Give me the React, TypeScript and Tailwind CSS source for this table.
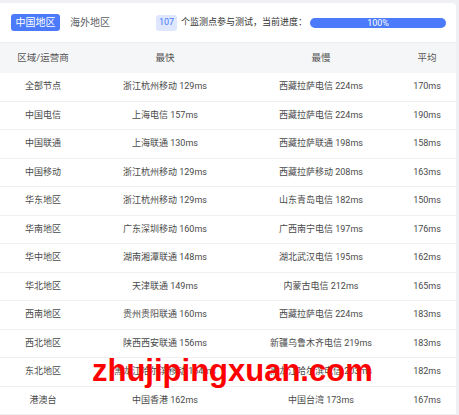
import React from "react";

const rows: [string, string, string, string][] = [
  ["全部节点", "浙江杭州移动 129ms", "西藏拉萨电信 224ms", "170ms"],
  ["中国电信", "上海电信 157ms", "西藏拉萨电信 224ms", "190ms"],
  ["中国联通", "上海联通 130ms", "西藏拉萨联通 198ms", "158ms"],
  ["中国移动", "浙江杭州移动 129ms", "西藏拉萨移动 208ms", "163ms"],
  ["华东地区", "浙江杭州移动 129ms", "山东青岛电信 182ms", "150ms"],
  ["华南地区", "广东深圳移动 160ms", "广西南宁电信 197ms", "176ms"],
  ["华中地区", "湖南湘潭联通 148ms", "湖北武汉电信 195ms", "162ms"],
  ["华北地区", "天津联通 149ms", "内蒙古电信 212ms", "165ms"],
  ["西南地区", "贵州贵阳联通 160ms", "西藏拉萨电信 224ms", "183ms"],
  ["西北地区", "陕西西安联通 156ms", "新疆乌鲁木齐电信 219ms", "183ms"],
  ["东北地区", "黑龙江哈尔滨移动 164ms", "黑龙江哈尔滨电信 203ms", "182ms"],
  ["港澳台", "中国香港 162ms", "中国台湾 173ms", "167ms"],
];

export default function App() {
  return (
    <div
      className="relative w-[459px] h-[415px] overflow-hidden bg-[#eef0f3] pt-[3px]"
      style={{ fontFamily: 'Roboto, "Noto Sans CJK SC", sans-serif' }}
    >
      <div className="w-[456px] h-[412px] bg-white rounded-tr-[4px] overflow-hidden">
        <div className="h-[40px] flex items-center border-b border-[#ebeef5] pl-[11px]">
          <div className="h-[17px] w-[49px] rounded-[3px] bg-[#4b7bfa] text-white text-[10px] flex items-center justify-center">
            中国地区
          </div>
          <div className="ml-[10px] text-[10px] text-[#606266]">海外地区</div>
          <div className="ml-[46px] h-[16px] w-[21px] rounded-[3px] bg-[#dfe7ff] text-[#4b7bfa] text-[9px] flex items-center justify-center">
            107
          </div>
          <div className="ml-[4px] text-[9px] text-[#333]">个监测点参与测试，当前进度：</div>
          <div className="ml-[3px] h-[10px] w-[136px] rounded-full bg-[#4b7bfa] text-white text-[9px] leading-[10px] flex items-center justify-center">
            100%
          </div>
        </div>
        <div className="grid grid-cols-[86px_158px_154px_58px] h-[30px] items-center bg-[#f5f6f7] text-[9.5px] text-[#555] text-center">
          <div>区域/运营商</div>
          <div>最快</div>
          <div>最慢</div>
          <div>平均</div>
        </div>
        {rows.map((r, i) => (
          <div
            key={i}
            className="grid grid-cols-[86px_158px_154px_58px] h-[28.5px] items-center border-b border-[#efefef] text-[9px] text-[#4a4a4a] text-center whitespace-nowrap"
          >
            <div>{r[0]}</div>
            <div>{r[1]}</div>
            <div>{r[2]}</div>
            <div>{r[3]}</div>
          </div>
        ))}
      </div>
      <div
        className="absolute left-[92px] top-[355px] text-[31px] font-bold text-[#ff0000] leading-none"
        style={{ fontFamily: '"Liberation Sans", Arial, sans-serif' }}
      >
        zhujipingxuan.com
      </div>
    </div>
  );
}
